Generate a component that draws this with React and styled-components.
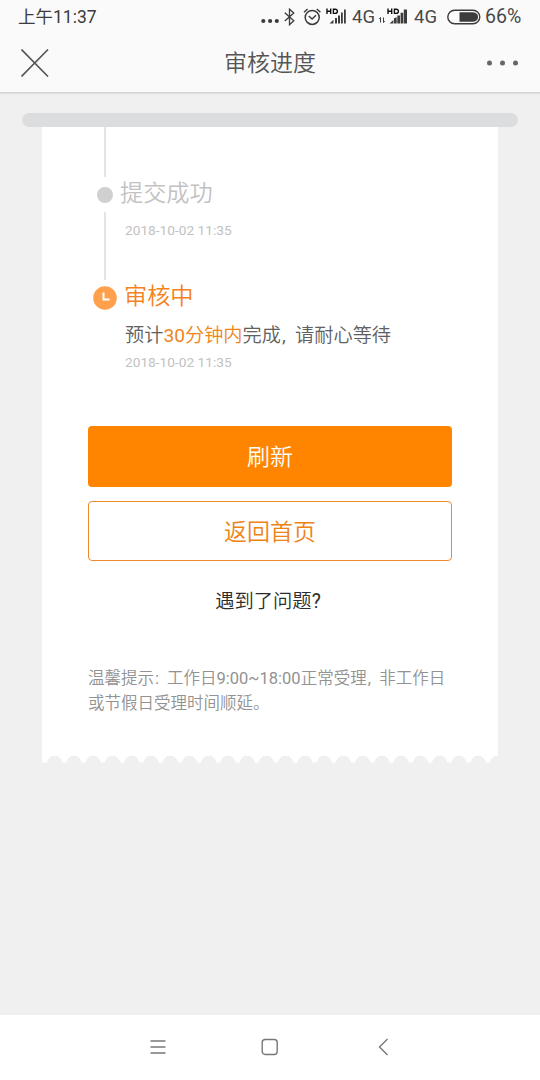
import React from 'react'
import styled, { createGlobalStyle } from 'styled-components'

const GlobalStyle = createGlobalStyle`
  * {
    box-sizing: border-box;
  }

  body {
    margin: 0;
    background: #f0f0f0;
    font-family: Roboto, 'Noto Sans CJK SC', sans-serif;
    font-weight: 350;
  }
`

const Screen = styled.div`
  display: flex;
  flex-direction: column;
  width: 540px;
  height: 1080px;
  overflow: hidden;
  background: #f0f0f1;
`

const Header = styled.header`
  height: 93px;
  background: #fafafa;
  border-bottom: 1px solid #d2d2d2;
  box-shadow: 0 1px 1px #e2e2e2;
`

const StatusBar = styled.div`
  display: flex;
  align-items: center;
  height: 34px;
  padding-left: 18px;
  color: #3c3c3c;
  font-size: 17.5px;
  font-weight: 400;
  line-height: 34px;
  white-space: nowrap;

  svg {
    display: block;
    flex: none;
    margin-bottom: 1px;
  }
`

const Clock = styled.div`
  width: 242px;
`

const StatusText = styled.div`
  width: ${props => props.$width}px;
  color: #484848;
  font-size: ${props => props.$size || 18.5}px;
`

const TitleBar = styled.div`
  display: flex;
  align-items: center;
  justify-content: space-between;
  height: 58px;
  padding: 0 21px;

  svg {
    display: block;
  }
`

const Title = styled.h1`
  margin: 2px 0 0;
  color: #555;
  font-size: 23px;
  font-weight: 350;
  line-height: 34px;
`

const Main = styled.main`
  flex: 1;
  padding: 20px 22px 0;
`

const Slot = styled.div`
  height: 14px;
  border-radius: 7px;
  background: #dcddde;
`

const Receipt = styled.section`
  width: 456px;
  margin: 0 0 0 20px;
`

const Paper = styled.div`
  height: 629px;
  padding: 0 46px;
  background: #fff;
`

const Edge = styled.svg`
  display: block;
`

const Line = styled.div`
  width: 2px;
  height: ${props => props.$height}px;
  margin-left: 16px;
  background: #e4e4e4;
`

const Step = styled.div`
  display: flex;
  height: ${props => props.$height}px;
`

const Marker = styled.div`
  display: flex;
  align-items: center;
  justify-content: center;
  width: 34px;
  height: 35px;
  margin-right: ${props => props.$gap}px;

  svg {
    display: block;
  }
`

const Dot = styled.div`
  width: 16px;
  height: 16px;
  border-radius: 50%;
  background: #d0d0d0;
`

const StepBody = styled.div`
  color: ${props => props.$color};
  white-space: nowrap;
`

const StepTitle = styled.div`
  padding-top: 1px;
  font-size: 23.2px;
  line-height: 31px;
`

const StepText = styled.div`
  margin: 10px 0 0 1px;
  color: #606060;
  font-size: 19.2px;
  line-height: 28px;

  em {
    color: #f08519;
    font-style: normal;
  }
`

const Time = styled.div`
  margin: ${props => props.$margin};
  color: #c2c2c2;
  font-size: 13.7px;
  font-weight: 400;
  line-height: 20px;
`

const Num = styled.span`
  font-weight: 400;
`

// full width punctuation, set tighter than its em box
const Punct = styled.span`
  display: inline-block;
  width: ${props => props.$width}px;
  padding-left: 1px;
  font-weight: 400;
`

const Button = styled.button`
  display: block;
  width: 364px;
  height: ${props => props.$primary ? 61 : 60}px;
  margin: 0 0 14px;
  padding: 0 0 ${props => props.$primary ? 4 : 2}px;
  border: ${props => props.$primary ? '0' : '1.5px solid #ee8a2a'};
  border-radius: 4px;
  background: ${props => props.$primary ? '#ff8400' : '#fff'};
  color: ${props => props.$primary ? '#fff' : '#ee8315'};
  font: 350 23px Roboto, 'Noto Sans CJK SC', sans-serif;
`

const Help = styled.div`
  margin-top: 27px;
  color: #2c2c2c;
  font-size: 19.3px;
  line-height: 28px;
  text-align: center;
  padding-right: 4px;
`

const Tips = styled.p`
  margin: 50px 0 0;
  color: #929292;
  font-size: 16.5px;
  line-height: 25px;
  white-space: nowrap;
`

const NavBar = styled.nav`
  display: flex;
  justify-content: center;
  align-items: center;
  gap: 94px;
  height: 65px;
  padding-bottom: 1px;
  background: #fff;

  svg {
    display: block;
  }
`

const HdMark = () => (
  <path d='M1 .6v5.400M4.700 .6v5.400M1 3.300h3.700M7.400 1.200v4.200h1.800q2.200 0 2.200-2.100t-2.200-2.100z' fill='none' stroke='#111' strokeWidth='1.400' />
)

const Signal = () => (
  <svg width='26' height='18' viewBox='0 0 26 18'>
    <HdMark />
    <path fill='#3c3c3c' d='M3.500 15.600L7.500 11.800v3.800zM9 10h2v5.600H9zM12 7.500h2v8.100h-2zM15 4.600h1.800v11H15zM18 1.600h1.800v14H18z' />
  </svg>
)

const SignalFull = () => (
  <svg width='27' height='18' viewBox='0 0 27 18'>
    <HdMark />
    <path fill='#3c3c3c' d='M2.500 15.600L6.400 12v3.600zM7 10.300l2.700-1v6.300H7zM10.300 7.600H13v8h-2.700zM13.600 4.800h2.600v10.800h-2.600zM16.800 1.600H20v14h-3.200z' />
  </svg>
)

const StatusIcons = () => (
  <>
    <svg width='24' height='18' viewBox='0 0 24 18' fill='#3c3c3c'>
      <circle cx='3.3' cy='13' r='2.1' />
      <circle cx='10.1' cy='13' r='2.1' />
      <circle cx='16.8' cy='13' r='2.1' />
    </svg>
    <svg width='19' height='18' viewBox='0 0 19 18' fill='none' stroke='#3c3c3c' strokeWidth='1.3'>
      <path d='M.8 4.7l9 8-4.3 4V1.2l4.3 3.8-9 8' />
    </svg>
    <svg width='23' height='18' viewBox='0 0 23 18' fill='none' stroke='#3c3c3c' strokeWidth='1.5'>
      <circle cx='9.2' cy='9.4' r='7' />
      <path d='M5.8 8l3.3 3L13 7.2M1 4.3L4.6 1M17.4 4.3L13.8 1' />
    </svg>
    <Signal />
  </>
)

const Battery = () => (
  <svg width='38' height='18' viewBox='0 0 38 18'>
    <rect x='.8' y='2.2' width='32' height='13.6' rx='6.8' fill='none' stroke='#3c3c3c' strokeWidth='1.4' />
    <path d='M12.500 4.300h13.500q5 .4 5 4.700T26 13.700H12.500z' fill='#3c3c3c' />
  </svg>
)

// torn bottom edge of the receipt
const notches = Array.from({ length: 24 }, (_, i) => 12.7 + i * 19.25)

const TornEdge = () => (
  <Edge width='456' height='7' viewBox='0 0 456 7'>
    <rect width='456' height='6.5' fill='#fff' />
    {notches.map(x => (
      <circle key={x} cx={x} cy='7.2' r='7.1' fill='#f0f0f1' stroke='#eaeaea' strokeWidth='.6' />
    ))}
  </Edge>
)

const App = () => (
  <Screen>
    <GlobalStyle />
    <Header>
      <StatusBar>
        <Clock>上午11:37</Clock>
        <StatusIcons />
        <StatusText $width={27}>4G</StatusText>
        <svg width='8' height='18' viewBox='0 0 8 18' fill='none' stroke='#3c3c3c'>
          <path d='M1.500 14.500V9.500L.3 11M4.500 9.500v5l1.200-1.500' />
        </svg>
        <SignalFull />
        <StatusText $width={33}>4G</StatusText>
        <Battery />
        <StatusText $width={40} $size={19.5}>66%</StatusText>
      </StatusBar>
      <TitleBar>
        <svg width='33' height='28' viewBox='0 0 33 28' fill='none' stroke='#555' strokeWidth='1.6'>
          <path d='M.5 .5l26.500 27M27 .5L.5 27.500' />
        </svg>
        <Title>审核进度</Title>
        <svg width='33' height='6' viewBox='0 0 33 6' fill='#666'>
          <circle cx='3.500' cy='3' r='2.500' />
          <circle cx='16.500' cy='3' r='2.500' />
          <circle cx='29.500' cy='3' r='2.500' />
        </svg>
      </TitleBar>
    </Header>
    <Main>
      <Slot />
      <Receipt>
        <Paper>
          <Line $height={50} />
          <Step $height={35}>
            <Marker $gap={-2}><Dot /></Marker>
            <StepBody $color='#c2c2c2'>
              <StepTitle>提交成功</StepTitle>
              <Time $margin='11px 0 0 5px'>2018-10-02 11:35</Time>
            </StepBody>
          </Step>
          <Line $height={68} />
          <Step $height={146}>
            <Marker $gap={2}>
              <svg width='24' height='24' viewBox='0 0 24 24'>
                <circle cx='12' cy='12' r='11.800' fill='#ffa04d' />
                <path d='M10.500 6.500v7h6' fill='none' stroke='#fff' strokeWidth='2' />
              </svg>
            </Marker>
            <StepBody $color='#f58220'>
              <StepTitle>审核中</StepTitle>
              <StepText>
                预计<em><Num>30</Num>分钟内</em>完成<Punct $width={14.2}>,</Punct>请耐心等待
              </StepText>
              <Time $margin='2px 0 0 1px'>2018-10-02 11:35</Time>
            </StepBody>
          </Step>
          <Button $primary>刷新</Button>
          <Button>返回首页</Button>
          <Help>遇到了问题<Num>?</Num></Help>
          <Tips>
            温馨提示<Punct $width={13}>:</Punct>工作日<Num>9:00~18:00</Num>正常受理<Punct $width={12.5}>,</Punct>非工作日<br />
            或节假日受理时间顺延。
          </Tips>
        </Paper>
        <TornEdge />
      </Receipt>
    </Main>
    <NavBar>
      <svg width='18' height='18' viewBox='0 0 18 18' fill='none' stroke='#777' strokeWidth='1.400'>
        <path d='M1.500 3h15M1.500 9h15M1.500 15h15' />
      </svg>
      <svg width='18' height='18' viewBox='0 0 18 18' fill='none' stroke='#777' strokeWidth='1.400'>
        <rect x='1.200' y='1.500' width='15' height='15' rx='3' />
      </svg>
      <svg width='18' height='18' viewBox='0 0 18 18' fill='none' stroke='#777' strokeWidth='1.400'>
        <path d='M14.500 1l-8 8 8 8' />
      </svg>
    </NavBar>
  </Screen>
)

export default App
